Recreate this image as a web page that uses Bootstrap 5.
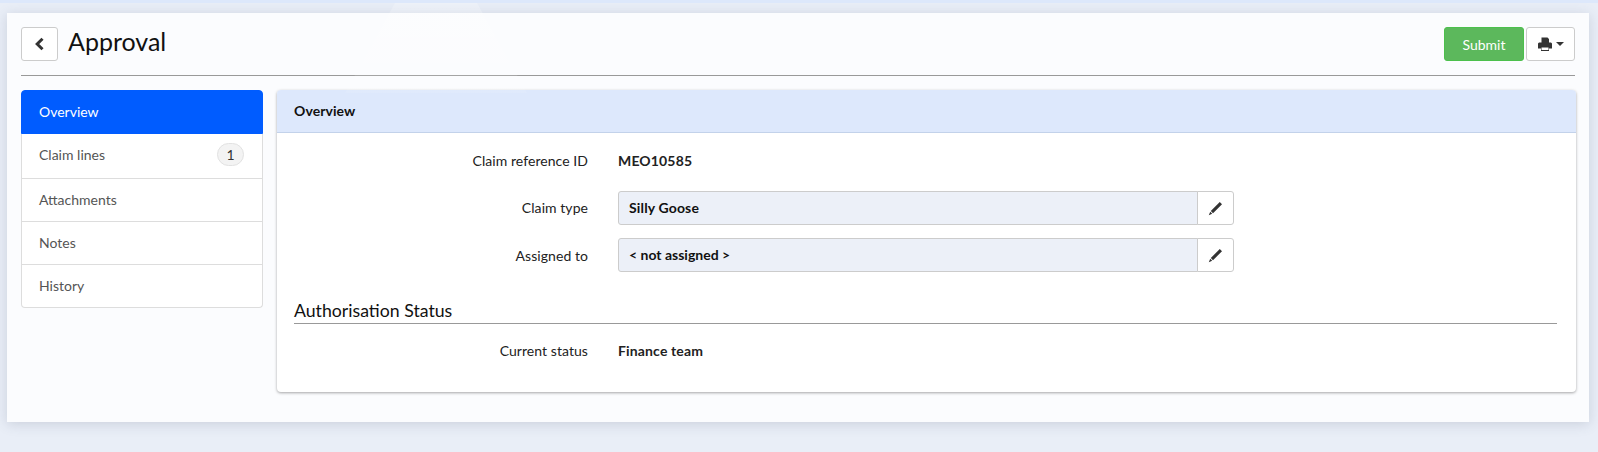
<!DOCTYPE html>
<html lang="en">
<head>
<meta charset="utf-8">
<title>Approval</title>
<link rel="stylesheet" href="https://cdn.jsdelivr.net/npm/bootstrap@5.3.0/dist/css/bootstrap.min.css">
<style>
html,body{height:452px;overflow:hidden}
body{background:#e9eef7;font-family:Lato,"Liberation Sans",sans-serif;font-size:14px;color:#212529;border-top:3px solid #dde8fb;padding:10px 9px 0 7px;position:relative}
body::before{content:"";position:absolute;left:345px;top:0;width:182px;height:90px;background:linear-gradient(to bottom,rgba(255,255,255,.22),rgba(255,255,255,.08));clip-path:polygon(50px 0,132px 0,182px 100%,0 100%);pointer-events:none;z-index:2}
.shell{height:409px;background:#fbfcfe;box-shadow:0 2px 12px rgba(60,70,100,.18);padding:14px 13px 0 14px}
.topbar{height:49px;border-bottom:1px solid #999;margin-bottom:14px;margin-right:1px;align-items:flex-start}
.backbtn{width:37px;height:34px;padding:0;border:1px solid #ccc;background:#fff;border-radius:3px;display:flex;align-items:center;justify-content:center}
.pagetitle{font-size:25px;font-weight:400;line-height:28px;margin:0 0 0 10px;color:#111}
.subbtn{width:80px;height:34px;background:#5cb85c;border:1px solid #4cc04c;color:#fff;font-size:14px;padding:0;border-radius:3px}
.subbtn:hover{background:#5cb85c;color:#fff}
.printbtn{width:49px;height:34px;background:#fff;border:1px solid #ccc;border-radius:3px;padding:0;margin-left:2px;display:flex;align-items:center;justify-content:center;gap:4px}
.caretmark{width:0;height:0;border-left:4px solid transparent;border-right:4px solid transparent;border-top:4px solid #333}
.sidenav{width:242px;flex:none;margin-right:14px;align-self:flex-start;border-radius:4px}
.sidenav .list-group-item{background:#fff;color:#555;border-color:#ddd;height:43px;padding:0 18px 1px 17px;display:flex;align-items:center;justify-content:space-between;font-size:14px}
.sidenav .list-group-item.active{background:#005cff;border-color:#005cff;color:#fff;height:44px;padding-bottom:2px}
.sidenav .claimrow{height:45px;padding-bottom:3px}
.countpill{width:27px;height:23px;border-radius:12px;background:#f3f3f3;border:1px solid #e2e2e2;color:#333;font-size:14px;display:flex;align-items:center;justify-content:center}
.maincard{flex:1;height:302px;border:0;border-radius:4px;box-shadow:0 1px 3px rgba(0,0,0,.35);background:#fff}
.maincard .card-header{height:43px;background:#dde8fc;border-bottom:1px solid #c3d2ea;padding:0 17px 2px;display:flex;align-items:center;font-weight:700;color:#111;font-size:14px;letter-spacing:.08px;border-radius:4px 4px 0 0}
.maincard .card-body{padding:0 19px 0 17px}
.fieldrow{display:flex;align-items:center}
.fieldlabel{width:294px;flex:none;text-align:right;color:#222;font-size:14px;letter-spacing:.06px;padding-bottom:1px}
.assignedlabel{padding-bottom:0}
.fieldval{margin-left:30px;font-weight:700;color:#222;letter-spacing:.15px;margin-bottom:1px}
.firstrow{height:52px;padding-top:5px;padding-bottom:2px}
.inputrow{height:47px;padding-top:6px;padding-bottom:7px}
.editgroup{margin-left:30px;width:616px;height:34px;flex-wrap:nowrap}
.editgroup .input-group-text{flex:1;background:#ecf0f8;border-color:#ccc;font-weight:700;color:#111;font-size:14px;padding:0 10px 1px;border-radius:3px 0 0 3px}
.editgroup .widerval{letter-spacing:.15px}
.editbtn{width:37px;background:#fff;border:1px solid #ccc;border-radius:0 3px 3px 0;padding:0;display:flex;align-items:center;justify-content:center}
.sectionhead{font-size:17.7px;font-weight:400;color:#111;line-height:24px;margin:20px 0 0;padding-bottom:0;border-bottom:1px solid #999;height:25px}
.lastrow{height:57px;padding-bottom:3px}
</style>
</head>
<body>
<div class="shell">
  <div class="topbar d-flex">
    <button class="backbtn" type="button" aria-label="Back"><svg width="11" height="14" viewBox="0 0 11 14"><path d="M8.500 1.800 3.200 7l5.300 5.200" fill="none" stroke="#333" stroke-width="3"/></svg></button>
    <h1 class="pagetitle">Approval</h1>
    <div class="ms-auto d-flex">
      <button class="btn subbtn" type="button">Submit</button>
      <button class="printbtn" type="button" aria-label="Print"><svg width="14" height="14" viewBox="0 0 14 14"><path fill="#333" fill-rule="evenodd" d="M3.500.5h6l1.500 1.500v3.500h2l1 1v5h-3v2.500H3V11.500H0v-5l1-1h2.500zM3.500 10.500v2.500h7v-2.500z"/></svg><span class="caretmark"></span></button>
    </div>
  </div>
  <div class="d-flex">
    <div class="list-group sidenav">
      <a class="list-group-item active" href="#">Overview</a>
      <a class="list-group-item claimrow" href="#">Claim lines <span class="countpill">1</span></a>
      <a class="list-group-item" href="#">Attachments</a>
      <a class="list-group-item" href="#">Notes</a>
      <a class="list-group-item" href="#">History</a>
    </div>
    <div class="card maincard">
      <div class="card-header">Overview</div>
      <div class="card-body">
        <div class="fieldrow firstrow"><div class="fieldlabel">Claim reference ID</div><div class="fieldval">MEO10585</div></div>
        <div class="fieldrow inputrow"><div class="fieldlabel">Claim type</div>
          <div class="input-group editgroup"><span class="input-group-text widerval">Silly Goose</span><button class="editbtn" type="button" aria-label="Edit"><svg width="15" height="15" viewBox="0 0 15 15"><path fill="#333" d="M11.800 1 14 3.200 5 12.200 2.800 10zM2.200 10.800 4.200 12.800.8 14.200z"/></svg></button></div>
        </div>
        <div class="fieldrow inputrow"><div class="fieldlabel assignedlabel">Assigned to</div>
          <div class="input-group editgroup"><span class="input-group-text">&lt; not assigned &gt;</span><button class="editbtn" type="button" aria-label="Edit"><svg width="15" height="15" viewBox="0 0 15 15"><path fill="#333" d="M11.800 1 14 3.200 5 12.200 2.800 10zM2.200 10.800 4.200 12.800.8 14.200z"/></svg></button></div>
        </div>
        <h2 class="sectionhead">Authorisation Status</h2>
        <div class="fieldrow lastrow"><div class="fieldlabel">Current status</div><div class="fieldval">Finance team</div></div>
      </div>
    </div>
  </div>
</div>
<script src="https://cdn.jsdelivr.net/npm/bootstrap@5.3.0/dist/js/bootstrap.bundle.min.js"></script>
</body>
</html>
